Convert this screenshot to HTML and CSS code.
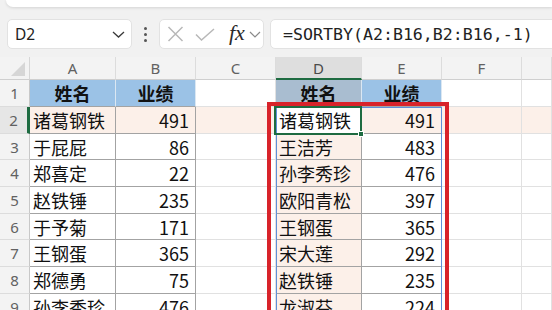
FILE: index.html
```html
<!DOCTYPE html>
<html lang="zh">
<head>
<meta charset="utf-8">
<link rel="stylesheet" href="styles.css">
</head>
<body>
<div class="app">
  <div class="ribbon-edge"></div>
  <div class="fbar">
    <div class="namebox">
      <span>D2</span>
      <svg class="chev" width="13" height="7" viewBox="0 0 13 7"><path d="M1 1 L6.5 6 L12 1" fill="none" stroke="#3a3a3a" stroke-width="1.3"/></svg>
    </div>
    <div class="grip"><i></i><i></i><i></i></div>
    <div class="fbtns">
      <svg width="17" height="16" viewBox="0 0 17 16"><path d="M1.5 1 L15.5 15 M15.5 1 L1.5 15" stroke="#b8b8b8" stroke-width="1.5" fill="none"/></svg>
      <svg width="20" height="13" viewBox="0 0 20 13"><path d="M1 6.5 L6.5 12 L19 1" stroke="#b8b8b8" stroke-width="1.5" fill="none"/></svg>
      <span class="fx">fx</span>
      <svg width="12" height="7" viewBox="0 0 12 7"><path d="M1 1 L6 6 L11 1" fill="none" stroke="#8a8a8a" stroke-width="1.2"/></svg>
    </div>
    <div class="formula">=SORTBY(A2:B16,B2:B16,-1)</div>
  </div>
  <div class="sheet">
    <div class="grid">
      <div class="corner"><span class="tri"></span></div>
      <div class="ch">A</div><div class="ch">B</div><div class="ch">C</div><div class="ch sel">D</div><div class="ch">E</div><div class="ch">F</div><div class="ch"></div>

      <div class="rh">1</div>
      <div class="c hd">姓名</div><div class="c hd">业绩</div><div class="c"></div><div class="c hd hdg">姓名</div><div class="c hd">业绩</div><div class="c"></div><div class="c"></div>

      <div class="rh rsel">2</div>
      <div class="c bd t hl">诸葛钢铁</div><div class="c bd n hl">491</div><div class="c hl"></div><div class="c bd t">诸葛钢铁</div><div class="c bd n hl">491</div><div class="c hl"></div><div class="c hl"></div>

      <div class="rh">3</div>
      <div class="c bd t">于屁屁</div><div class="c bd n">86</div><div class="c"></div><div class="c bd t hl">王洁芳</div><div class="c bd n">483</div><div class="c"></div><div class="c"></div>

      <div class="rh">4</div>
      <div class="c bd t">郑喜定</div><div class="c bd n">22</div><div class="c"></div><div class="c bd t hl">孙李秀珍</div><div class="c bd n">476</div><div class="c"></div><div class="c"></div>

      <div class="rh">5</div>
      <div class="c bd t">赵铁锤</div><div class="c bd n">235</div><div class="c"></div><div class="c bd t hl">欧阳青松</div><div class="c bd n">397</div><div class="c"></div><div class="c"></div>

      <div class="rh">6</div>
      <div class="c bd t">于予菊</div><div class="c bd n">171</div><div class="c"></div><div class="c bd t hl">王钢蛋</div><div class="c bd n">365</div><div class="c"></div><div class="c"></div>

      <div class="rh">7</div>
      <div class="c bd t">王钢蛋</div><div class="c bd n">365</div><div class="c"></div><div class="c bd t hl">宋大莲</div><div class="c bd n">292</div><div class="c"></div><div class="c"></div>

      <div class="rh">8</div>
      <div class="c bd t">郑德勇</div><div class="c bd n">75</div><div class="c"></div><div class="c bd t hl">赵铁锤</div><div class="c bd n">235</div><div class="c"></div><div class="c"></div>

      <div class="rh">9</div>
      <div class="c bd t">孙李秀珍</div><div class="c bd n">476</div><div class="c"></div><div class="c bd t hl">龙淑芬</div><div class="c bd n">224</div><div class="c"></div><div class="c"></div>
    </div>
    <div class="spill"></div>
    <div class="active"><span class="handle"></span></div>
    <div class="redbox"></div>
  </div>
</div>
</body>
</html>
```

FILE: styles.css
```css
* { box-sizing: border-box; }
html, body {
  margin: 0;
  padding: 0;
  width: 552px;
  height: 310px;
  overflow: hidden;
  background: #f1f1f1;
}
.app {
  width: 552px;
  height: 310px;
  overflow: hidden;
  font-family: "Noto Sans", "Noto Sans CJK SC", sans-serif;
}
.ribbon-edge {
  height: 7px;
  margin-left: 6px;
  background: #fff;
  border-bottom-left-radius: 8px;
  box-shadow: 0 1px 3px rgba(0,0,0,0.12);
}
.fbar {
  display: flex;
  align-items: stretch;
  height: 30px;
  margin-top: 12px;
  padding-left: 7px;
  margin-bottom: 8px;
}
.namebox {
  width: 125px;
  background: #fff;
  border: 1px solid #e2e2e2;
  border-radius: 5px;
  display: flex;
  align-items: center;
  justify-content: space-between;
  padding: 0 6px 0 7px;
  font-size: 15.5px;
  color: #222;
}
.namebox .chev { margin-top: 1px; }
.grip {
  width: 27px;
  display: flex;
  flex-direction: column;
  align-items: center;
  justify-content: center;
  gap: 3px;
}
.grip i {
  display: block;
  width: 3px;
  height: 3px;
  border-radius: 50%;
  background: #555;
}
.fbtns {
  width: 105px;
  background: #fff;
  border: 1px solid #e2e2e2;
  border-radius: 5px;
  display: flex;
  align-items: center;
  padding-left: 7px;
  gap: 0;
}
.fbtns svg:first-child { margin-right: 11px; }
.fbtns svg:nth-child(2) { margin-right: 14px; }
.fx {
  font-family: "Liberation Serif", "DejaVu Serif", serif;
  font-style: italic;
  font-size: 22px;
  color: #2a2a2a;
  line-height: 1;
  margin-right: 4px;
  margin-top: -2px;
}
.formula {
  flex: 1;
  margin-left: 6px;
  margin-right: -10px;
  background: #fff;
  border: 1px solid #e2e2e2;
  border-radius: 5px 0 0 5px;
  display: flex;
  align-items: center;
  padding-left: 12px;
  font-family: "DejaVu Sans Mono", "Liberation Mono", monospace;
  font-size: 16.6px;
  color: #222;
}
.sheet {
  position: relative;
  background: #fff;
}
.grid {
  display: grid;
  grid-template-columns: 30px 86px 80px 80px 86px 80px 80px 30px;
  grid-template-rows: 23px 27px 27px 26px 27px 27px 26px 27px 27px 26px;
}
.corner {
  background: #f3f3f3;
  border-right: 1px solid #d6d6d6;
  border-bottom: 1px solid #cfcfcf;
  position: relative;
}
.tri {
  position: absolute;
  right: 4px;
  bottom: 3px;
  width: 14px;
  height: 14px;
  background: #d6d6d6;
  clip-path: polygon(100% 0, 100% 100%, 0 100%);
}
.ch {
  background: #f3f3f3;
  border-right: 1px solid #dcdcdc;
  border-bottom: 1px solid #cfcfcf;
  display: flex;
  align-items: center;
  justify-content: center;
  font-size: 15px;
  color: #616161;
}
.ch.sel {
  background: #dedede;
  border-bottom: 2px solid #1e6b41;
  color: #4a4a4a;
}
.rh {
  background: #f3f3f3;
  border-right: 1px solid #c8c8c8;
  border-bottom: 1px solid #dcdcdc;
  display: flex;
  align-items: center;
  justify-content: center;
  font-size: 15px;
  color: #616161;
}
.rh.rsel {
  background: #e6e6e6;
  border-right: 3px solid #1e6b41;
}
.c {
  border-right: 1px solid #e1e1e1;
  border-bottom: 1px solid #e1e1e1;
  display: flex;
  align-items: center;
  font-family: "Noto Sans CJK SC", sans-serif;
  font-size: 18px;
  color: #111;
  white-space: nowrap;
  overflow: hidden;
}
.c.bd {
  border-right-color: #a3a3a3;
  border-bottom-color: #a3a3a3;
}
.c.t { padding-left: 3px; }
.c.n { justify-content: flex-end; padding-right: 6px; }
.c.hl { background: #fcf0e9; }
.c.hd {
  background: #9bc2e6;
  justify-content: center;
  font-weight: bold;
  border-right-color: #dbe7f2;
  border-bottom-color: #a3a3a3;
}
.c.hd.hdg { background: #a9bdd0; }
.spill {
  position: absolute;
  left: 276px;
  top: 50px;
  width: 166px;
  height: 300px;
  border: 1px solid #5f8fd8;
}
.active {
  position: absolute;
  left: 274px;
  top: 49px;
  width: 88px;
  height: 29px;
  border: 2px solid #1e6b41;
}
.handle {
  position: absolute;
  right: -4px;
  bottom: -4px;
  width: 6px;
  height: 6px;
  background: #1e6b41;
  border: 1px solid #fff;
}
.redbox {
  position: absolute;
  left: 267px;
  top: 45px;
  width: 182px;
  height: 320px;
  border: 4px solid #d8232a;
}
```
